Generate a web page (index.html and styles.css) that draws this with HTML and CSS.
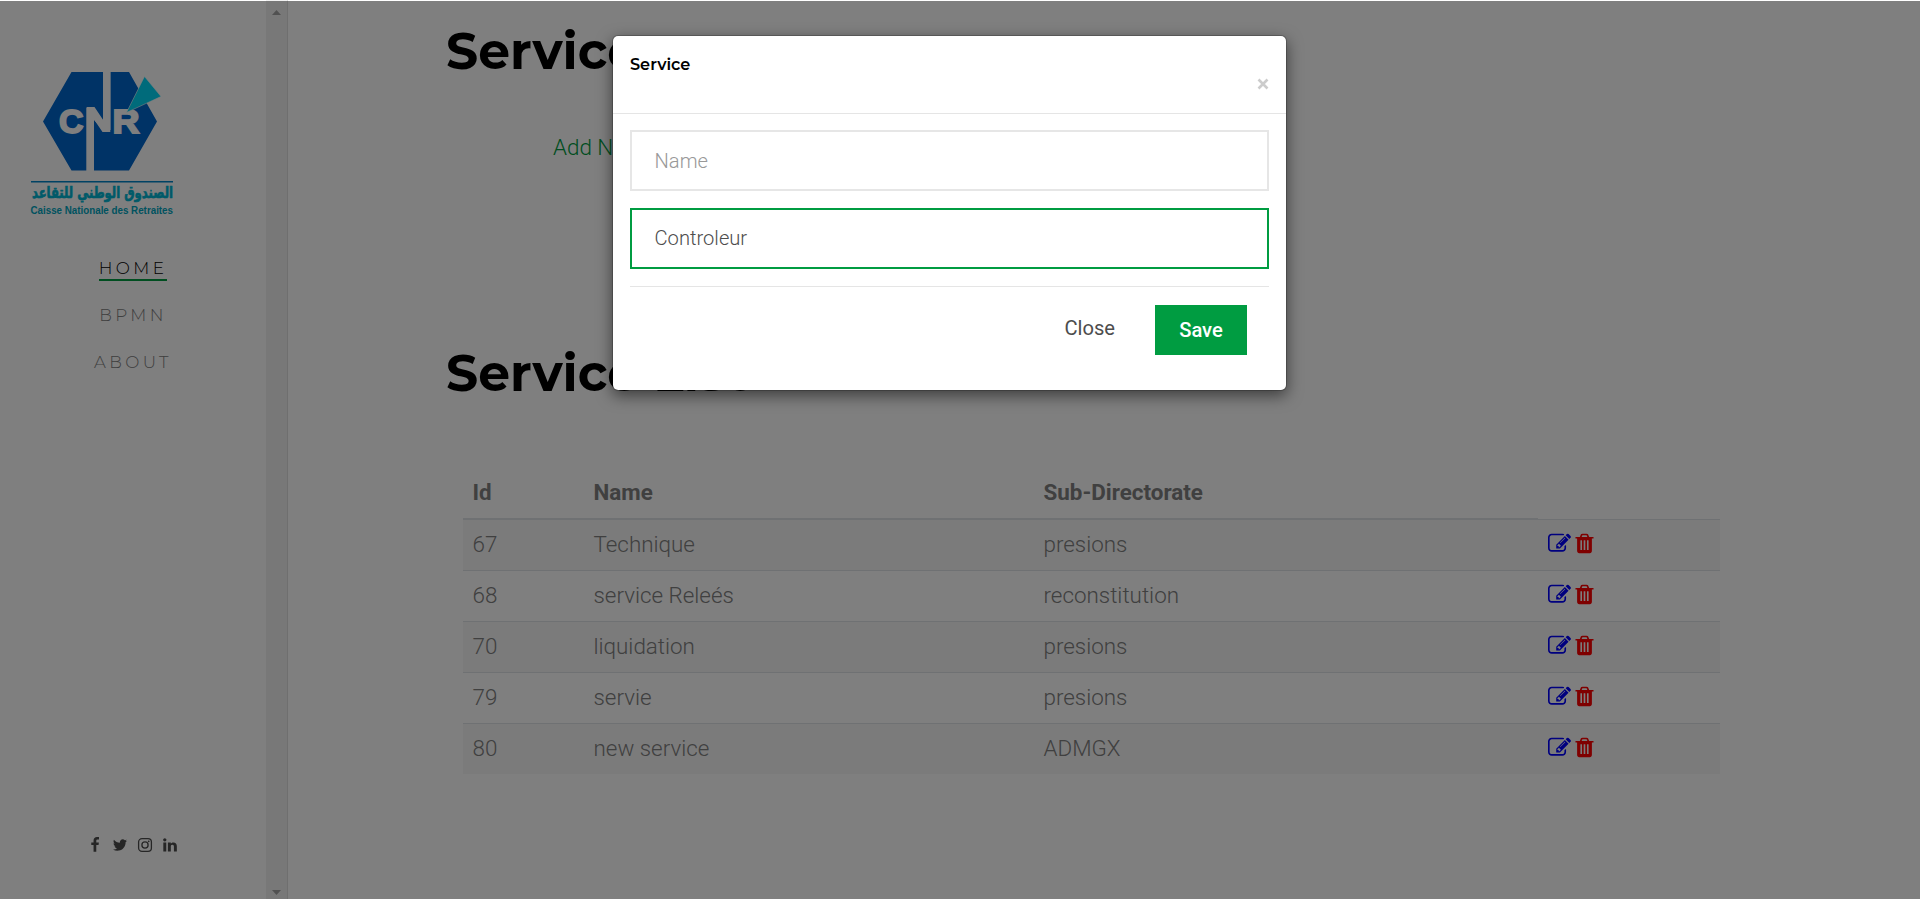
FILE: index.html
```html
<!DOCTYPE html>
<html lang="en">
<head>
<meta charset="utf-8">
<title>Service</title>
<link rel="stylesheet" href="styles.css">
</head>
<body>
<svg class="defs" width="0" height="0" aria-hidden="true">
  <symbol id="edit" viewBox="0 0 1792 1792"><path d="M888 1184l116-116-152-152-116 116v56h96v96h56zm440-720q-16-16-33 1l-350 350q-17 17-1 33t33-1l350-350q17-17 1-33zm80 594v190q0 119-84.500 203.500t-203.500 84.500h-832q-119 0-203.500-84.500t-84.500-203.500v-832q0-119 84.500-203.500t203.500-84.500h832q63 0 117 25 15 7 18 23 3 17-9 29l-49 49q-14 14-32 8-23-6-45-6h-832q-66 0-113 47t-47 113v832q0 66 47 113t113 47h832q66 0 113-47t47-113v-126q0-13 9-22l64-64q15-15 35-7t20 29zm-96-738l288 288-672 672h-288v-288zm444 132l-92 92-288-288 92-92q28-28 68-28t68 28l152 152q28 28 28 68t-28 68z"/></symbol>
  <symbol id="trash" viewBox="0 0 1792 1792"><path d="M704 1376v-704q0-14-9-23t-23-9h-64q-14 0-23 9t-9 23v704q0 14 9 23t23 9h64q14 0 23-9t9-23zm256 0v-704q0-14-9-23t-23-9h-64q-14 0-23 9t-9 23v704q0 14 9 23t23 9h64q14 0 23-9t9-23zm256 0v-704q0-14-9-23t-23-9h-64q-14 0-23 9t-9 23v704q0 14 9 23t23 9h64q14 0 23-9t9-23zm-544-992h448l-48-117q-7-9-17-11h-317q-10 2-17 11zm928 32v64q0 14-9 23t-23 9h-96v948q0 83-47 143.500t-113 60.500h-832q-66 0-113-58.500t-47-141.500v-952h-96q-14 0-23-9t-9-23v-64q0-14 9-23t23-9h309l70-167q15-37 54-63t79-26h320q40 0 79 26t54 63l70 167h309q14 0 23 9t9 23z"/></symbol>
</svg>

<div class="page">
  <aside class="sidebar">
    <div class="sidebar-body">
      <svg class="logo" viewBox="0 0 146 150" role="img" aria-label="CNR">
        <path fill="#0066cc" d="M40.500 2H72V51L59 38H55.500V100.500H40.500L12 51.500Z"/>
        <path fill="#0066cc" d="M79.500 2H98L126 51.500L98 100.500H63V50L72 60H79.500Z"/>
        <path fill="#fff" d="M72.200 0H79.300V62H71.500L62.700 49V102H55.600V37H63.500L72.200 50Z"/>
        <text class="logo-mark" x="28" y="62.500" textLength="24.500" lengthAdjust="spacingAndGlyphs">C</text>
        <text class="logo-mark" x="81.500" y="62.500" textLength="27" lengthAdjust="spacingAndGlyphs">R</text>
        <path fill="#00d6f6" stroke="#fff" stroke-width=".6" d="M113.500 6.500L130 26.500L95.500 42.500Z"/>
        <path stroke="#0084c8" stroke-width="1.500" d="M0 111.800H142"/>
        <text class="logo-ar" x="142" y="127.500" direction="rtl" textLength="141" lengthAdjust="spacingAndGlyphs">الصندوق الوطني للتقاعد</text>
        <text class="logo-fr" x="-.5" y="144.300" textLength="142.500" lengthAdjust="spacingAndGlyphs">Caisse Nationale des Retraites</text>
      </svg>
      <nav class="menu">
        <a class="menu-link active">HOME</a>
        <a class="menu-link">BPMN</a>
        <a class="menu-link">ABOUT</a>
      </nav>
      <div class="social">
        <svg viewBox="0 0 1792 1792"><path d="M1343 12v264h-157q-86 0-116 36t-30 108v189h293l-39 296h-254v759h-306v-759h-255v-296h255v-218q0-186 104-288.500t277-102.500q147 0 228 12z"/></svg>
        <svg viewBox="0 0 1792 1792"><path d="M1684 408q-67 98-162 167 1 14 1 42 0 130-38 259.500t-115.500 248.500-184.500 210.500-258 146-323 54.500q-271 0-496-145 35 4 78 4 225 0 401-138-105-2-188-64.500t-114-159.500q33 5 61 5 43 0 85-11-112-23-185.500-111.500t-73.500-205.500v-4q68 38 146 41-66-44-105-115t-39-154q0-88 44-163 121 149 294.500 238.500t371.500 99.500q-8-38-8-74 0-134 94.500-228.500t228.500-94.500q140 0 236 102 109-21 205-78-37 115-142 178 93-10 186-50z"/></svg>
        <svg class="insta" viewBox="0 0 16 16"><rect x="1.600" y="1.600" width="12.800" height="12.800" rx="3.400"/><circle cx="8" cy="8" r="3.100"/><circle class="dot" cx="11.700" cy="4.300" r=".9"/></svg>
        <svg viewBox="0 0 1792 1792"><path d="M477 625v991h-330v-991h330zm21-306q1 73-50.500 122t-135.500 49h-2q-82 0-132-49t-50-122q0-74 51.500-122.500t134.500-48.500 133 48.500 51 122.500zm1166 729v568h-329v-530q0-105-40.500-164.500t-126.500-59.500q-63 0-105.500 34.500t-63.500 85.500q-11 30-11 81v553h-329q2-399 2-647t-1-296l-1-48h329v144h-2q20-32 41-56t56.500-52 87-43.500 114.500-15.500q171 0 275 113.500t104 332.500z"/></svg>
      </div>
    </div>
    <div class="scrollbar">
      <svg viewBox="0 0 9 5"><path d="M0 5L4.500 0L9 5Z"/></svg>
      <svg viewBox="0 0 9 5"><path d="M0 0L4.500 5L9 0Z"/></svg>
    </div>
  </aside>

  <main class="content">
    <h1 class="title">Service</h1>
    <a class="add-link">Add New</a>
    <h1 class="title">Service List</h1>
    <table class="services">
      <colgroup><col class="col-id"><col class="col-name"><col class="col-sub"><col></colgroup>
      <thead><tr><th>Id</th><th>Name</th><th>Sub-Directorate</th></tr></thead>
      <tbody>
        <tr><td>67</td><td>Technique</td><td>presions</td><td><div class="actions"><svg class="edit"><use href="#edit"/></svg><svg class="trash"><use href="#trash"/></svg></div></td></tr>
        <tr><td>68</td><td>service Releés</td><td>reconstitution</td><td><div class="actions"><svg class="edit"><use href="#edit"/></svg><svg class="trash"><use href="#trash"/></svg></div></td></tr>
        <tr><td>70</td><td>liquidation</td><td>presions</td><td><div class="actions"><svg class="edit"><use href="#edit"/></svg><svg class="trash"><use href="#trash"/></svg></div></td></tr>
        <tr><td>79</td><td>servie</td><td>presions</td><td><div class="actions"><svg class="edit"><use href="#edit"/></svg><svg class="trash"><use href="#trash"/></svg></div></td></tr>
        <tr><td>80</td><td>new service</td><td>ADMGX</td><td><div class="actions"><svg class="edit"><use href="#edit"/></svg><svg class="trash"><use href="#trash"/></svg></div></td></tr>
      </tbody>
    </table>
  </main>
</div>

<div class="backdrop">
  <div class="modal">
    <header class="modal-header">
      <h4 class="modal-title">Service</h4>
      <svg class="close" viewBox="0 0 12 12"><path d="M1.500 1.500L10.500 10.500M10.500 1.500L1.500 10.500"/></svg>
    </header>
    <div class="modal-body">
      <div class="field placeholder">Name</div>
      <div class="field focused">Controleur</div>
      <footer class="modal-footer">
        <span class="btn-close">Close</span>
        <span class="btn-save">Save</span>
      </footer>
    </div>
  </div>
</div>
</body>
</html>
```
FILE: styles.css
```css
* { box-sizing: border-box; }

body {
  margin: 0;
  height: 899px;
  overflow: hidden;
  background: #fff;
  color: #808080;
  font: 300 22.4px/33px Roboto, sans-serif;
}

.defs { position: absolute; }

.page { display: flex; height: 899px; }

.sidebar {
  display: flex;
  flex: none;
  width: 288px;
  border-right: 1px solid #dedede;
}

.sidebar-body {
  display: flex;
  flex-direction: column;
  width: 266px;
  padding: 70px 0 46px 31px;
}

.logo { display: block; width: 146px; height: 150px; overflow: visible; }
.logo-mark { font: 700 33px "Liberation Sans", Arial, sans-serif; fill: #fff; stroke: #fff; stroke-width: 1.8; }
.logo-ar { font: 700 16px "DejaVu Sans", sans-serif; fill: #00b4d2; stroke: #00b4d2; stroke-width: .7; }
.logo-fr { font: 700 10px "Liberation Sans", Arial, sans-serif; fill: #00a5c0; }

.menu {
  display: flex;
  flex-direction: column;
  align-items: center;
  gap: 23px;
  width: 204px;
  margin-top: 37px;
}

.menu-link {
  height: 24px;
  color: #808080;
  font: 300 16.8px/22px Montserrat, Inter, sans-serif;
  letter-spacing: 3.36px;
  border-bottom: 2px solid transparent;
}
.menu-link.active { color: #000; border-color: #009c41; }

.social {
  display: flex;
  gap: 9.200px;
  margin: auto 0 0 55.5px;
}
.social svg { width: 16px; height: 16px; fill: #4d4d4d; }
.social .insta { fill: none; stroke: #4d4d4d; stroke-width: 1.300; }
.social .insta .dot { fill: #4d4d4d; stroke: none; }

.scrollbar {
  display: flex;
  flex-direction: column;
  justify-content: space-between;
  align-items: center;
  width: 21px;
  padding: 10px 0 4px;
  background: #f1f1f1;
}
.scrollbar svg { width: 9px; height: 5px; fill: #a3a3a3; }

.content { flex: 1; padding: 20px 200px 0 158px; }

.title {
  margin: 0;
  color: #000;
  font: 700 50.4px/62px Montserrat, Inter, sans-serif;
  white-space: nowrap;
}

.add-link {
  display: block;
  margin: 49px 0 178px 107px;
  color: #009c41;
}

.services {
  width: 1257px;
  margin: 65px 0 0 17px;
  table-layout: fixed;
  border-collapse: collapse;
}
.col-id { width: 121px; }
.col-name { width: 450px; }
.col-sub { width: 504px; }
.services th {
  height: 50px;
  padding: 0 9.5px 3px;
  text-align: left;
  font-weight: 700;
  border-bottom: 2px solid #dee2e6;
}
.services td { height: 51px; padding: 0 9.5px 1px; border-top: 1px solid #dee2e6; }
.services tbody tr:nth-child(odd) { background: #f7f7f7; }

.actions { display: flex; gap: 2px; height: 24px; }
.actions svg { width: 23px; height: 23px; }
.actions .edit { fill: #00f; }
.actions .trash { fill: #f00; }

.backdrop {
  position: absolute;
  inset: 1px 0 0;
  background: rgba(0, 0, 0, .5);
}

.modal {
  width: 675px;
  height: 356px;
  margin: 34px 0 0 612px;
  background: #fff;
  background-clip: padding-box;
  border: 1px solid rgba(0, 0, 0, .2);
  border-radius: 6px;
  box-shadow: 0 5px 15px rgba(0, 0, 0, .5);
}

.modal-header {
  display: flex;
  justify-content: space-between;
  height: 78px;
  padding: 17px 17px 0;
  border-bottom: 1px solid #e5e5e5;
}
.modal-title {
  margin: 0;
  color: #000;
  font: 600 16.1px/22px Montserrat, Inter, sans-serif;
}
.close { width: 12px; height: 12px; margin-top: 25px; stroke: #ccc; stroke-width: 2.600; }

.modal-body { padding: 16px 17px 0; }

.field {
  height: 61px;
  margin-bottom: 17px;
  padding: 0 22.5px;
  border: 2px solid #e6e6e6;
  color: #4d4d4d;
  font-size: 20.16px;
  line-height: 58px;
}
.field.placeholder { color: #999; }
.field.focused { border-color: #009c41; line-height: 56px; }

.modal-footer {
  display: flex;
  justify-content: flex-end;
  gap: 40px;
  padding: 18px 22px 0;
  border-top: 1px solid #e5e5e5;
  font-size: 20.16px;
}
.btn-close { color: #4d4d4d; font-weight: 400; line-height: 46px; }
.btn-save {
  width: 92px;
  height: 50px;
  background: #009c41;
  color: #fff;
  font-weight: 500;
  line-height: 50px;
  text-align: center;
}
```
